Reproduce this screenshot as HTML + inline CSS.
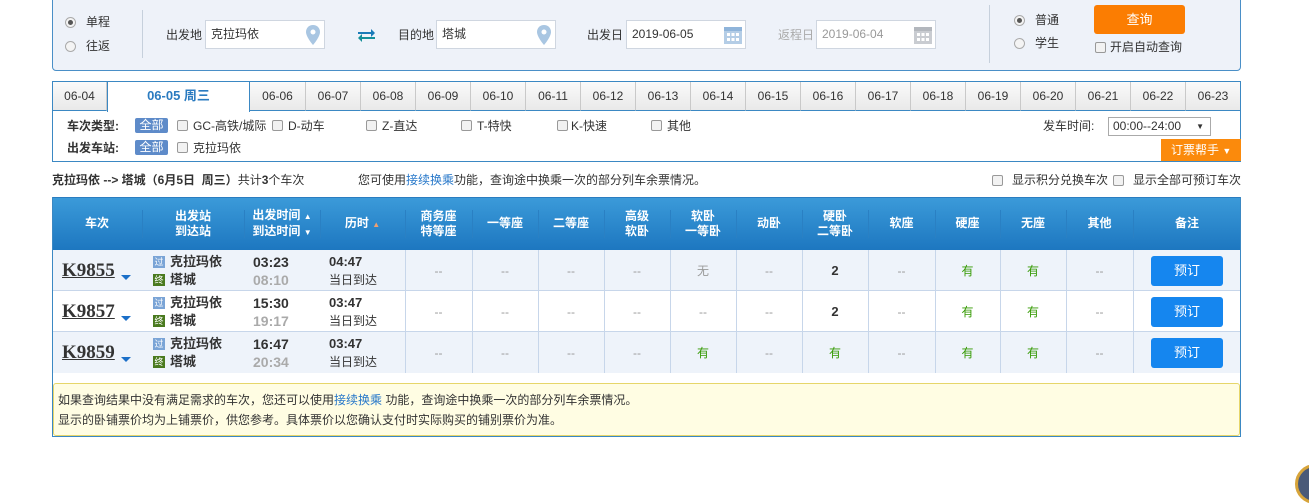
<!DOCTYPE html>
<html><head><meta charset="utf-8">
<style>
*{margin:0;padding:0;box-sizing:border-box}
body{width:1309px;height:490px;background:#fff;position:relative;overflow:hidden;font-family:"Liberation Sans","Noto Sans CJK SC",sans-serif;font-size:12px;color:#333}
.a{position:absolute;white-space:nowrap;line-height:16px}
.radio{position:absolute;width:11px;height:11px;border:1px solid #aaa;border-radius:50%;background:#f4f4f4}
.radio.on::after{content:"";position:absolute;left:2px;top:2px;width:5px;height:5px;border-radius:50%;background:#555}
.cb{position:absolute;width:11px;height:11px;border:1px solid #999;border-radius:2px;background:#f2f2f2}
.inp{position:absolute;height:29px;border:1px solid #cfd6e0;background:#fff;font-size:12px;line-height:27px;padding-left:5px;color:#333}
.tab{position:absolute;top:82px;height:29px;border-right:1px solid #c9c9c9;border-bottom:1px solid #3b88c3;background:linear-gradient(#fafafa,#e9e9e9);text-align:center;line-height:28px;font-size:12px;color:#333}
.badge{position:absolute;width:33px;height:15px;background:#5e8bc9;color:#fff;text-align:center;line-height:15px;font-size:12px;border-radius:2px}
.th{position:absolute;top:197px;height:53px;color:#fff;font-weight:bold;font-size:12px;text-align:center;display:flex;flex-direction:column;align-items:center;justify-content:center;line-height:15px;white-space:nowrap}
.row{position:absolute;left:52px;width:1189px;height:41px;border-bottom:1px solid #c7d6ea}
.vl{position:absolute;top:250px;height:123px;width:1px;background:#c7d6ea}
.hl{position:absolute;top:210px;height:28px;width:1px;background:#2a80c3}
.c{position:absolute;text-align:center;line-height:16px;font-size:12px}
.dash{color:#999}
.g{color:#339900}
.btn{position:absolute;left:1151px;width:72px;height:30px;background:#1586ef;border-radius:3px;color:#fff;text-align:center;line-height:30px;font-size:13px}
.tn{position:absolute;left:62px;font-family:"Liberation Serif",serif;font-weight:bold;font-size:19px;text-decoration:underline;color:#333;line-height:20px}
.tri{position:absolute;left:121px;width:0;height:0;border-left:5px solid transparent;border-right:5px solid transparent;border-top:5px solid #1b6fc8}
.ic{position:absolute;left:153px;width:12px;height:12px;font-size:9px;line-height:12px;text-align:center;color:#fff}
.st{position:absolute;left:170px;font-weight:bold;font-size:13px;line-height:16px;color:#333}
.t1{position:absolute;left:253px;font-weight:bold;font-size:14px;line-height:16px;color:#333}
.t2{position:absolute;left:253px;font-weight:bold;font-size:14px;line-height:16px;color:#aaa}
</style></head><body>

<div style="position:absolute;left:52px;top:-5px;width:1189px;height:76px;background:#eef2f9;border:1px solid #4a8fc7;border-radius:0 0 4px 4px"></div>
<div class="radio on" style="left:65px;top:17px"></div><div class="a" style="left:86px;top:14px">单程</div>
<div class="radio" style="left:65px;top:41px"></div><div class="a" style="left:86px;top:38px">往返</div>
<div style="position:absolute;left:142px;top:10px;width:1px;height:48px;background:#c6d0dc"></div>
<div class="a" style="left:166px;top:27px">出发地</div>
<div class="inp" style="left:205px;top:20px;width:120px">克拉玛依</div>
<svg style="position:absolute;left:306px;top:25px" width="14" height="20" viewBox="0 0 14 20"><path d="M7 0C3 0 0 3 0 7c0 5 7 13 7 13s7-8 7-13C14 3 11 0 7 0z" fill="#a9c6e2"/><circle cx="7" cy="7" r="2.5" fill="#fff"/></svg>
<svg style="position:absolute;left:358px;top:29px" width="17" height="13" viewBox="0 0 17 13"><path d="M0 3h13V0l4 4-4 4V5H0z" fill="#1a7bb8"/><path d="M17 10H4v3L0 9l4-4v3h13z" fill="#148f9a"/></svg>
<div class="a" style="left:398px;top:27px">目的地</div>
<div class="inp" style="left:436px;top:20px;width:120px">塔城</div>
<svg style="position:absolute;left:537px;top:25px" width="14" height="20" viewBox="0 0 14 20"><path d="M7 0C3 0 0 3 0 7c0 5 7 13 7 13s7-8 7-13C14 3 11 0 7 0z" fill="#a9c6e2"/><circle cx="7" cy="7" r="2.5" fill="#fff"/></svg>
<div class="a" style="left:587px;top:27px">出发日</div>
<div class="inp" style="left:626px;top:20px;width:120px">2019-06-05</div>
<svg style="position:absolute;left:724px;top:25px" width="18" height="19" viewBox="0 0 18 19"><rect x="0" y="2" width="18" height="17" fill="#b4cde6"/><rect x="0" y="2" width="18" height="4" fill="#8fb4da"/><g fill="#fff"><rect x="3" y="8" width="3" height="3"/><rect x="7.5" y="8" width="3" height="3"/><rect x="12" y="8" width="3" height="3"/><rect x="3" y="13" width="3" height="3"/><rect x="7.5" y="13" width="3" height="3"/><rect x="12" y="13" width="3" height="3"/></g></svg>
<div class="a" style="left:778px;top:27px;color:#aaa">返程日</div>
<div class="inp" style="left:816px;top:20px;width:120px;color:#999">2019-06-04</div>
<svg style="position:absolute;left:914px;top:25px" width="18" height="19" viewBox="0 0 18 19"><rect x="0" y="2" width="18" height="17" fill="#c9ccd1"/><rect x="0" y="2" width="18" height="4" fill="#b3b7bd"/><g fill="#fff"><rect x="3" y="8" width="3" height="3"/><rect x="7.5" y="8" width="3" height="3"/><rect x="12" y="8" width="3" height="3"/><rect x="3" y="13" width="3" height="3"/><rect x="7.5" y="13" width="3" height="3"/><rect x="12" y="13" width="3" height="3"/></g></svg>
<div style="position:absolute;left:989px;top:5px;width:1px;height:58px;background:#c6d0dc"></div>
<div class="radio on" style="left:1014px;top:15px"></div><div class="a" style="left:1035px;top:12px">普通</div>
<div class="radio" style="left:1014px;top:38px"></div><div class="a" style="left:1035px;top:35px">学生</div>
<div style="position:absolute;left:1094px;top:5px;width:91px;height:29px;background:#fb7d02;border-radius:3px;color:#fff;text-align:center;line-height:29px;font-size:13px">查询</div>
<div class="cb" style="left:1095px;top:42px"></div><div class="a" style="left:1110px;top:39px">开启自动查询</div>

<div style="position:absolute;left:52px;top:81px;width:1189px;height:81px;border:1px solid #3b88c3;background:#fff"></div>
<div class="tab" style="left:53px;width:54px;border-left:0">06-04</div>
<div style="position:absolute;left:107px;top:81px;width:143px;height:31px;background:#fff;border-left:1px solid #3b88c3;border-right:1px solid #3b88c3;border-top:1px solid #3b88c3;text-align:center;line-height:28px;font-weight:bold;color:#2b7bc0;font-size:13px">06-05 周三</div>
<div class="tab" style="left:250px;width:56px">06-06</div>
<div class="tab" style="left:306px;width:55px">06-07</div>
<div class="tab" style="left:361px;width:55px">06-08</div>
<div class="tab" style="left:416px;width:55px">06-09</div>
<div class="tab" style="left:471px;width:55px">06-10</div>
<div class="tab" style="left:526px;width:55px">06-11</div>
<div class="tab" style="left:581px;width:55px">06-12</div>
<div class="tab" style="left:636px;width:55px">06-13</div>
<div class="tab" style="left:691px;width:55px">06-14</div>
<div class="tab" style="left:746px;width:55px">06-15</div>
<div class="tab" style="left:801px;width:55px">06-16</div>
<div class="tab" style="left:856px;width:55px">06-17</div>
<div class="tab" style="left:911px;width:55px">06-18</div>
<div class="tab" style="left:966px;width:55px">06-19</div>
<div class="tab" style="left:1021px;width:55px">06-20</div>
<div class="tab" style="left:1076px;width:55px">06-21</div>
<div class="tab" style="left:1131px;width:55px">06-22</div>
<div class="tab" style="left:1186px;width:54px;border-right:0">06-23</div>

<div class="a" style="left:67px;top:118px;font-weight:bold">车次类型:</div>
<div class="badge" style="left:135px;top:118px">全部</div>
<div class="cb" style="left:177px;top:120px"></div><div class="a" style="left:193px;top:118px">GC-高铁/城际</div>
<div class="cb" style="left:272px;top:120px"></div><div class="a" style="left:288px;top:118px">D-动车</div>
<div class="cb" style="left:366px;top:120px"></div><div class="a" style="left:382px;top:118px">Z-直达</div>
<div class="cb" style="left:461px;top:120px"></div><div class="a" style="left:477px;top:118px">T-特快</div>
<div class="cb" style="left:557px;top:120px"></div><div class="a" style="left:571px;top:118px">K-快速</div>
<div class="cb" style="left:651px;top:120px"></div><div class="a" style="left:667px;top:118px">其他</div>
<div class="a" style="left:1043px;top:118px">发车时间:</div>
<div style="position:absolute;left:1108px;top:117px;width:103px;height:19px;border:1px solid #aaa;background:#fff;line-height:17px;padding-left:4px">00:00--24:00<span style="position:absolute;right:6px;font-size:8px">▼</span></div>
<div class="a" style="left:67px;top:140px;font-weight:bold">出发车站:</div>
<div class="badge" style="left:135px;top:140px">全部</div>
<div class="cb" style="left:177px;top:142px"></div><div class="a" style="left:193px;top:140px">克拉玛依</div>
<div style="position:absolute;left:1161px;top:139px;width:80px;height:22px;background:#fb8a0c;color:#fff;line-height:22px;padding-left:10px">订票帮手 <span style="font-size:9px">▼</span></div>

<div class="a" style="left:52px;top:172px"><b>克拉玛依 --&gt; 塔城（6月5日&nbsp; 周三）</b>共计<b>3</b>个车次</div>
<div class="a" style="left:358px;top:172px">您可使用<span style="color:#2677c9">接续换乘</span>功能，查询途中换乘一次的部分列车余票情况。</div>
<div class="cb" style="left:992px;top:175px"></div><div class="a" style="left:1012px;top:172px">显示积分兑换车次</div>
<div class="cb" style="left:1113px;top:175px"></div><div class="a" style="left:1133px;top:172px">显示全部可预订车次</div>

<div style="position:absolute;left:52px;top:197px;width:1189px;height:53px;background:linear-gradient(#3b9ad9,#1d77c0);border-top:1px solid #2a7dc0"></div>
<div class="hl" style="left:142px"></div><div class="hl" style="left:244px"></div><div class="hl" style="left:320px"></div><div class="hl" style="left:405px"></div><div class="hl" style="left:472px"></div><div class="hl" style="left:538px"></div><div class="hl" style="left:604px"></div><div class="hl" style="left:670px"></div><div class="hl" style="left:736px"></div><div class="hl" style="left:802px"></div><div class="hl" style="left:868px"></div><div class="hl" style="left:935px"></div><div class="hl" style="left:1000px"></div><div class="hl" style="left:1066px"></div><div class="hl" style="left:1133px"></div>
<div class="th" style="left:52px;width:90px">车次</div>
<div class="th" style="left:142px;width:102px"><span>出发站</span><span>到达站</span></div>
<div class="th" style="left:244px;width:76px"><span>出发时间 <span style="font-size:8px">▲</span></span><span>到达时间 <span style="font-size:8px">▼</span></span></div>
<div class="th" style="left:320px;width:85px"><span>历时 <span style="font-size:8px;color:#f0a070">▲</span></span></div>
<div class="th" style="left:405px;width:67px"><span>商务座</span><span>特等座</span></div>
<div class="th" style="left:472px;width:66px">一等座</div>
<div class="th" style="left:538px;width:66px">二等座</div>
<div class="th" style="left:604px;width:66px"><span>高级</span><span>软卧</span></div>
<div class="th" style="left:670px;width:66px"><span>软卧</span><span>一等卧</span></div>
<div class="th" style="left:736px;width:66px">动卧</div>
<div class="th" style="left:802px;width:66px"><span>硬卧</span><span>二等卧</span></div>
<div class="th" style="left:868px;width:67px">软座</div>
<div class="th" style="left:935px;width:65px">硬座</div>
<div class="th" style="left:1000px;width:66px">无座</div>
<div class="th" style="left:1066px;width:67px">其他</div>
<div class="th" style="left:1133px;width:108px">备注</div>

<div class="row" style="top:250px;background:#eef3fa"></div>
<div class="row" style="top:291px;background:#fff"></div>
<div class="row" style="top:332px;background:#eef3fa;border-bottom:0"></div>
<div class="vl" style="left:405px"></div><div class="vl" style="left:472px"></div><div class="vl" style="left:538px"></div><div class="vl" style="left:604px"></div><div class="vl" style="left:670px"></div><div class="vl" style="left:736px"></div><div class="vl" style="left:802px"></div><div class="vl" style="left:868px"></div><div class="vl" style="left:935px"></div><div class="vl" style="left:1000px"></div><div class="vl" style="left:1066px"></div><div class="vl" style="left:1133px"></div>

<div class="tn" style="top:261px">K9855</div><div class="tri" style="top:275px"></div>
<div class="ic" style="top:256px;background:#7aa4d6">过</div><div class="st" style="top:254px">克拉玛依</div>
<div class="ic" style="top:274px;background:#4a7a1f">终</div><div class="st" style="top:272px">塔城</div>
<div class="t1" style="top:254px">03:23</div><div class="t2" style="top:272px">08:10</div>
<div class="a" style="left:329px;top:254px;font-weight:bold;font-size:13px">04:47</div><div class="a" style="left:329px;top:272px">当日到达</div>
<div class="c dash" style="left:405px;width:67px;top:263px">--</div><div class="c dash" style="left:472px;width:66px;top:263px">--</div><div class="c dash" style="left:538px;width:66px;top:263px">--</div><div class="c dash" style="left:604px;width:66px;top:263px">--</div>
<div class="c" style="left:670px;width:66px;top:263px;color:#999">无</div><div class="c dash" style="left:736px;width:66px;top:263px">--</div>
<div class="c" style="left:802px;width:66px;top:263px;font-weight:bold;font-size:13px">2</div><div class="c dash" style="left:868px;width:67px;top:263px">--</div>
<div class="c g" style="left:935px;width:65px;top:263px">有</div><div class="c g" style="left:1000px;width:66px;top:263px">有</div><div class="c dash" style="left:1066px;width:67px;top:263px">--</div>
<div class="btn" style="top:256px">预订</div>

<div class="tn" style="top:302px">K9857</div><div class="tri" style="top:316px"></div>
<div class="ic" style="top:297px;background:#7aa4d6">过</div><div class="st" style="top:295px">克拉玛依</div>
<div class="ic" style="top:315px;background:#4a7a1f">终</div><div class="st" style="top:313px">塔城</div>
<div class="t1" style="top:295px">15:30</div><div class="t2" style="top:313px">19:17</div>
<div class="a" style="left:329px;top:295px;font-weight:bold;font-size:13px">03:47</div><div class="a" style="left:329px;top:313px">当日到达</div>
<div class="c dash" style="left:405px;width:67px;top:304px">--</div><div class="c dash" style="left:472px;width:66px;top:304px">--</div><div class="c dash" style="left:538px;width:66px;top:304px">--</div><div class="c dash" style="left:604px;width:66px;top:304px">--</div>
<div class="c dash" style="left:670px;width:66px;top:304px">--</div><div class="c dash" style="left:736px;width:66px;top:304px">--</div>
<div class="c" style="left:802px;width:66px;top:304px;font-weight:bold;font-size:13px">2</div><div class="c dash" style="left:868px;width:67px;top:304px">--</div>
<div class="c g" style="left:935px;width:65px;top:304px">有</div><div class="c g" style="left:1000px;width:66px;top:304px">有</div><div class="c dash" style="left:1066px;width:67px;top:304px">--</div>
<div class="btn" style="top:297px">预订</div>

<div class="tn" style="top:343px">K9859</div><div class="tri" style="top:357px"></div>
<div class="ic" style="top:338px;background:#7aa4d6">过</div><div class="st" style="top:336px">克拉玛依</div>
<div class="ic" style="top:356px;background:#4a7a1f">终</div><div class="st" style="top:354px">塔城</div>
<div class="t1" style="top:336px">16:47</div><div class="t2" style="top:354px">20:34</div>
<div class="a" style="left:329px;top:336px;font-weight:bold;font-size:13px">03:47</div><div class="a" style="left:329px;top:354px">当日到达</div>
<div class="c dash" style="left:405px;width:67px;top:345px">--</div><div class="c dash" style="left:472px;width:66px;top:345px">--</div><div class="c dash" style="left:538px;width:66px;top:345px">--</div><div class="c dash" style="left:604px;width:66px;top:345px">--</div>
<div class="c g" style="left:670px;width:66px;top:345px">有</div><div class="c dash" style="left:736px;width:66px;top:345px">--</div>
<div class="c g" style="left:802px;width:66px;top:345px">有</div><div class="c dash" style="left:868px;width:67px;top:345px">--</div>
<div class="c g" style="left:935px;width:65px;top:345px">有</div><div class="c g" style="left:1000px;width:66px;top:345px">有</div><div class="c dash" style="left:1066px;width:67px;top:345px">--</div>
<div class="btn" style="top:338px">预订</div>

<div style="position:absolute;left:52px;top:197px;width:1189px;height:240px;border-left:1px solid #3b88c3;border-right:1px solid #3b88c3;border-bottom:1px solid #3b88c3"></div>
<div style="position:absolute;left:53px;top:383px;width:1187px;height:53px;background:#fffde3;border:1px solid #e6d66a;border-radius:3px"></div>
<div class="a" style="left:58px;top:392px">如果查询结果中没有满足需求的车次，您还可以使用<span style="color:#2677c9">接续换乘</span> 功能，查询途中换乘一次的部分列车余票情况。</div>
<div class="a" style="left:58px;top:412px">显示的卧铺票价均为上铺票价，供您参考。具体票价以您确认支付时实际购买的铺别票价为准。</div>

<div style="position:absolute;left:1295px;top:464px;width:40px;height:40px;border-radius:50%;background:#4a5a78;border:3px solid #d7a43a"></div>
</body></html>
